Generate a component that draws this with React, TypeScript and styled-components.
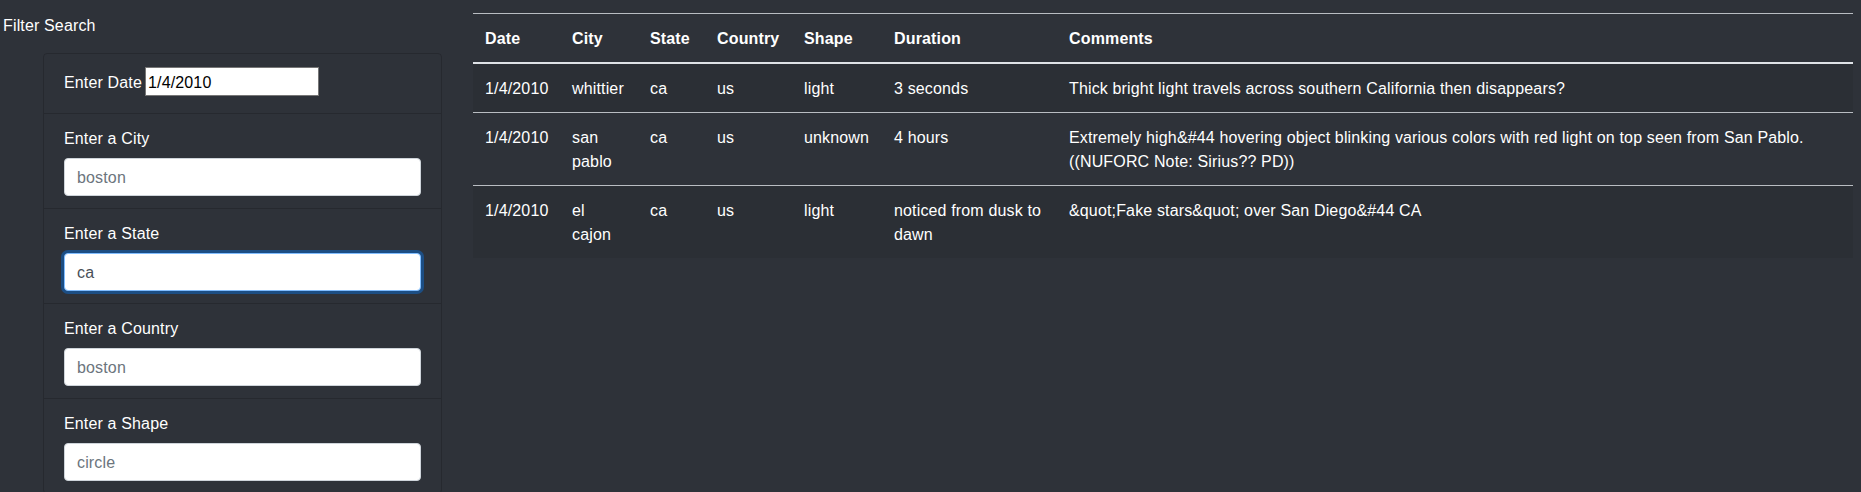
import React from "react";
import styled, { createGlobalStyle, css } from "styled-components";

const GlobalStyle = createGlobalStyle`
  html, body {
    margin: 0;
    padding: 0;
    background: #2e3239;
  }
  body {
    font-family: "Liberation Sans", Helvetica, Arial, sans-serif;
    font-size: 16px;
    line-height: 1.5;
    letter-spacing: 0.15px;
    color: #ffffff;
  }
  * { box-sizing: border-box; }
`;

const Page = styled.div`
  display: flex;
  align-items: flex-start;
  min-height: 560px;
`;

const Sidebar = styled.aside`
  flex: 0 0 465px;
  padding-top: 13px;
`;

const SidebarTitle = styled.div`
  padding: 1px 0 0 3px;
  height: 24px;
  line-height: 24px;
`;

const Card = styled.div`
  margin: 16px 0 0 43px;
  width: 399px;
  border: 1px solid rgba(0, 0, 0, 0.17);
  border-radius: 4px;
  display: flex;
  flex-direction: column;
`;

const Item = styled.div<{ $inline?: boolean }>`
  padding: 12px 20px;
  & + & {
    border-top: 1px solid rgba(0, 0, 0, 0.17);
  }
  ${(p) =>
    p.$inline &&
    css`
      display: flex;
      align-items: flex-start;
      gap: 3px;
      height: 59px;
    `}
`;

const InlineLabel = styled.label`
  line-height: 29px;
  margin-top: 2px;
`;

const DateInput = styled.input`
  width: 174px;
  height: 29px;
  margin-top: 1px;
  border: 1px solid #767676;
  background: #ffffff;
  color: #000000;
  font-family: inherit;
  font-size: 16px;
  letter-spacing: 0.15px;
  padding: 2px 2px 0;
  outline: none;
`;

const BlockLabel = styled.label`
  display: block;
  height: 24px;
  line-height: 24px;
  padding-top: 1px;
  margin-bottom: 8px;
`;

const TextInput = styled.input<{ $focused?: boolean }>`
  display: block;
  width: 100%;
  height: 38px;
  padding: 7px 12px 5px;
  font-family: inherit;
  font-size: 16px;
  letter-spacing: 0.15px;
  line-height: 24px;
  color: #495057;
  background: #ffffff;
  border: 1px solid #ced4da;
  border-radius: 4px;
  outline: none;
  &::placeholder {
    color: #6c757d;
  }
  ${(p) =>
    p.$focused &&
    css`
      border-color: #80bdff;
      box-shadow: 0 0 0 3px rgba(0, 123, 255, 0.38);
    `}
`;

const Main = styled.main`
  flex: 1;
  min-width: 0;
  padding: 13px 8px 0 8px;
`;

const Table = styled.table`
  width: 100%;
  border-collapse: separate;
  border-spacing: 0;
  table-layout: fixed;
`;

const HeadCell = styled.th`
  text-align: left;
  font-weight: bold;
  padding: 13px 12px 11px;
  line-height: 24px;
  vertical-align: bottom;
  border-top: 1px solid #b9bdc2;
  border-bottom: 2px solid #dee2e6;
`;

const Row = styled.tr`
  &:nth-child(odd) {
    background: rgba(0, 0, 0, 0.06);
  }
  & + & > td {
    border-top: 1px solid #b9bdc2;
  }
`;

const Cell = styled.td`
  padding: 13px 12px 11px;
  line-height: 24px;
  vertical-align: top;
`;

const columns = [
  { key: "date", label: "Date", width: 87 },
  { key: "city", label: "City", width: 78 },
  { key: "state", label: "State", width: 67 },
  { key: "country", label: "Country", width: 87 },
  { key: "shape", label: "Shape", width: 90 },
  { key: "duration", label: "Duration", width: 175 },
  { key: "comments", label: "Comments", width: undefined },
] as const;

type Sighting = {
  date: string;
  city: string;
  state: string;
  country: string;
  shape: string;
  duration: string;
  comments: string;
};

const rows: Sighting[] = [
  {
    date: "1/4/2010",
    city: "whittier",
    state: "ca",
    country: "us",
    shape: "light",
    duration: "3 seconds",
    comments: "Thick bright light travels across southern California then disappears?",
  },
  {
    date: "1/4/2010",
    city: "san pablo",
    state: "ca",
    country: "us",
    shape: "unknown",
    duration: "4 hours",
    comments:
      "Extremely high&#44 hovering object blinking various colors with red light on top seen from San Pablo. ((NUFORC Note: Sirius?? PD))",
  },
  {
    date: "1/4/2010",
    city: "el cajon",
    state: "ca",
    country: "us",
    shape: "light",
    duration: "noticed from dusk to dawn",
    comments: "&quot;Fake stars&quot; over San Diego&#44 CA",
  },
];

const filters = [
  { label: "Enter a City", placeholder: "boston", value: "" },
  { label: "Enter a State", placeholder: "", value: "ca", focused: true },
  { label: "Enter a Country", placeholder: "boston", value: "" },
  { label: "Enter a Shape", placeholder: "circle", value: "" },
];

export default function App() {
  return (
    <>
      <GlobalStyle />
      <Page>
        <Sidebar>
          <SidebarTitle>Filter Search</SidebarTitle>
          <Card>
            <Item $inline>
              <InlineLabel htmlFor="datetime">Enter Date</InlineLabel>
              <DateInput id="datetime" type="text" defaultValue="1/4/2010" />
            </Item>
            {filters.map((f) => (
              <Item key={f.label}>
                <BlockLabel>{f.label}</BlockLabel>
                <TextInput
                  type="text"
                  placeholder={f.placeholder}
                  defaultValue={f.value}
                  $focused={f.focused}
                />
              </Item>
            ))}
          </Card>
        </Sidebar>
        <Main>
          <Table>
            <colgroup>
              {columns.map((c) => (
                <col key={c.key} style={c.width ? { width: c.width } : undefined} />
              ))}
            </colgroup>
            <thead>
              <tr>
                {columns.map((c) => (
                  <HeadCell key={c.key}>{c.label}</HeadCell>
                ))}
              </tr>
            </thead>
            <tbody>
              {rows.map((r, i) => (
                <Row key={i}>
                  {columns.map((c) => (
                    <Cell key={c.key}>{r[c.key]}</Cell>
                  ))}
                </Row>
              ))}
            </tbody>
          </Table>
        </Main>
      </Page>
    </>
  );
}
